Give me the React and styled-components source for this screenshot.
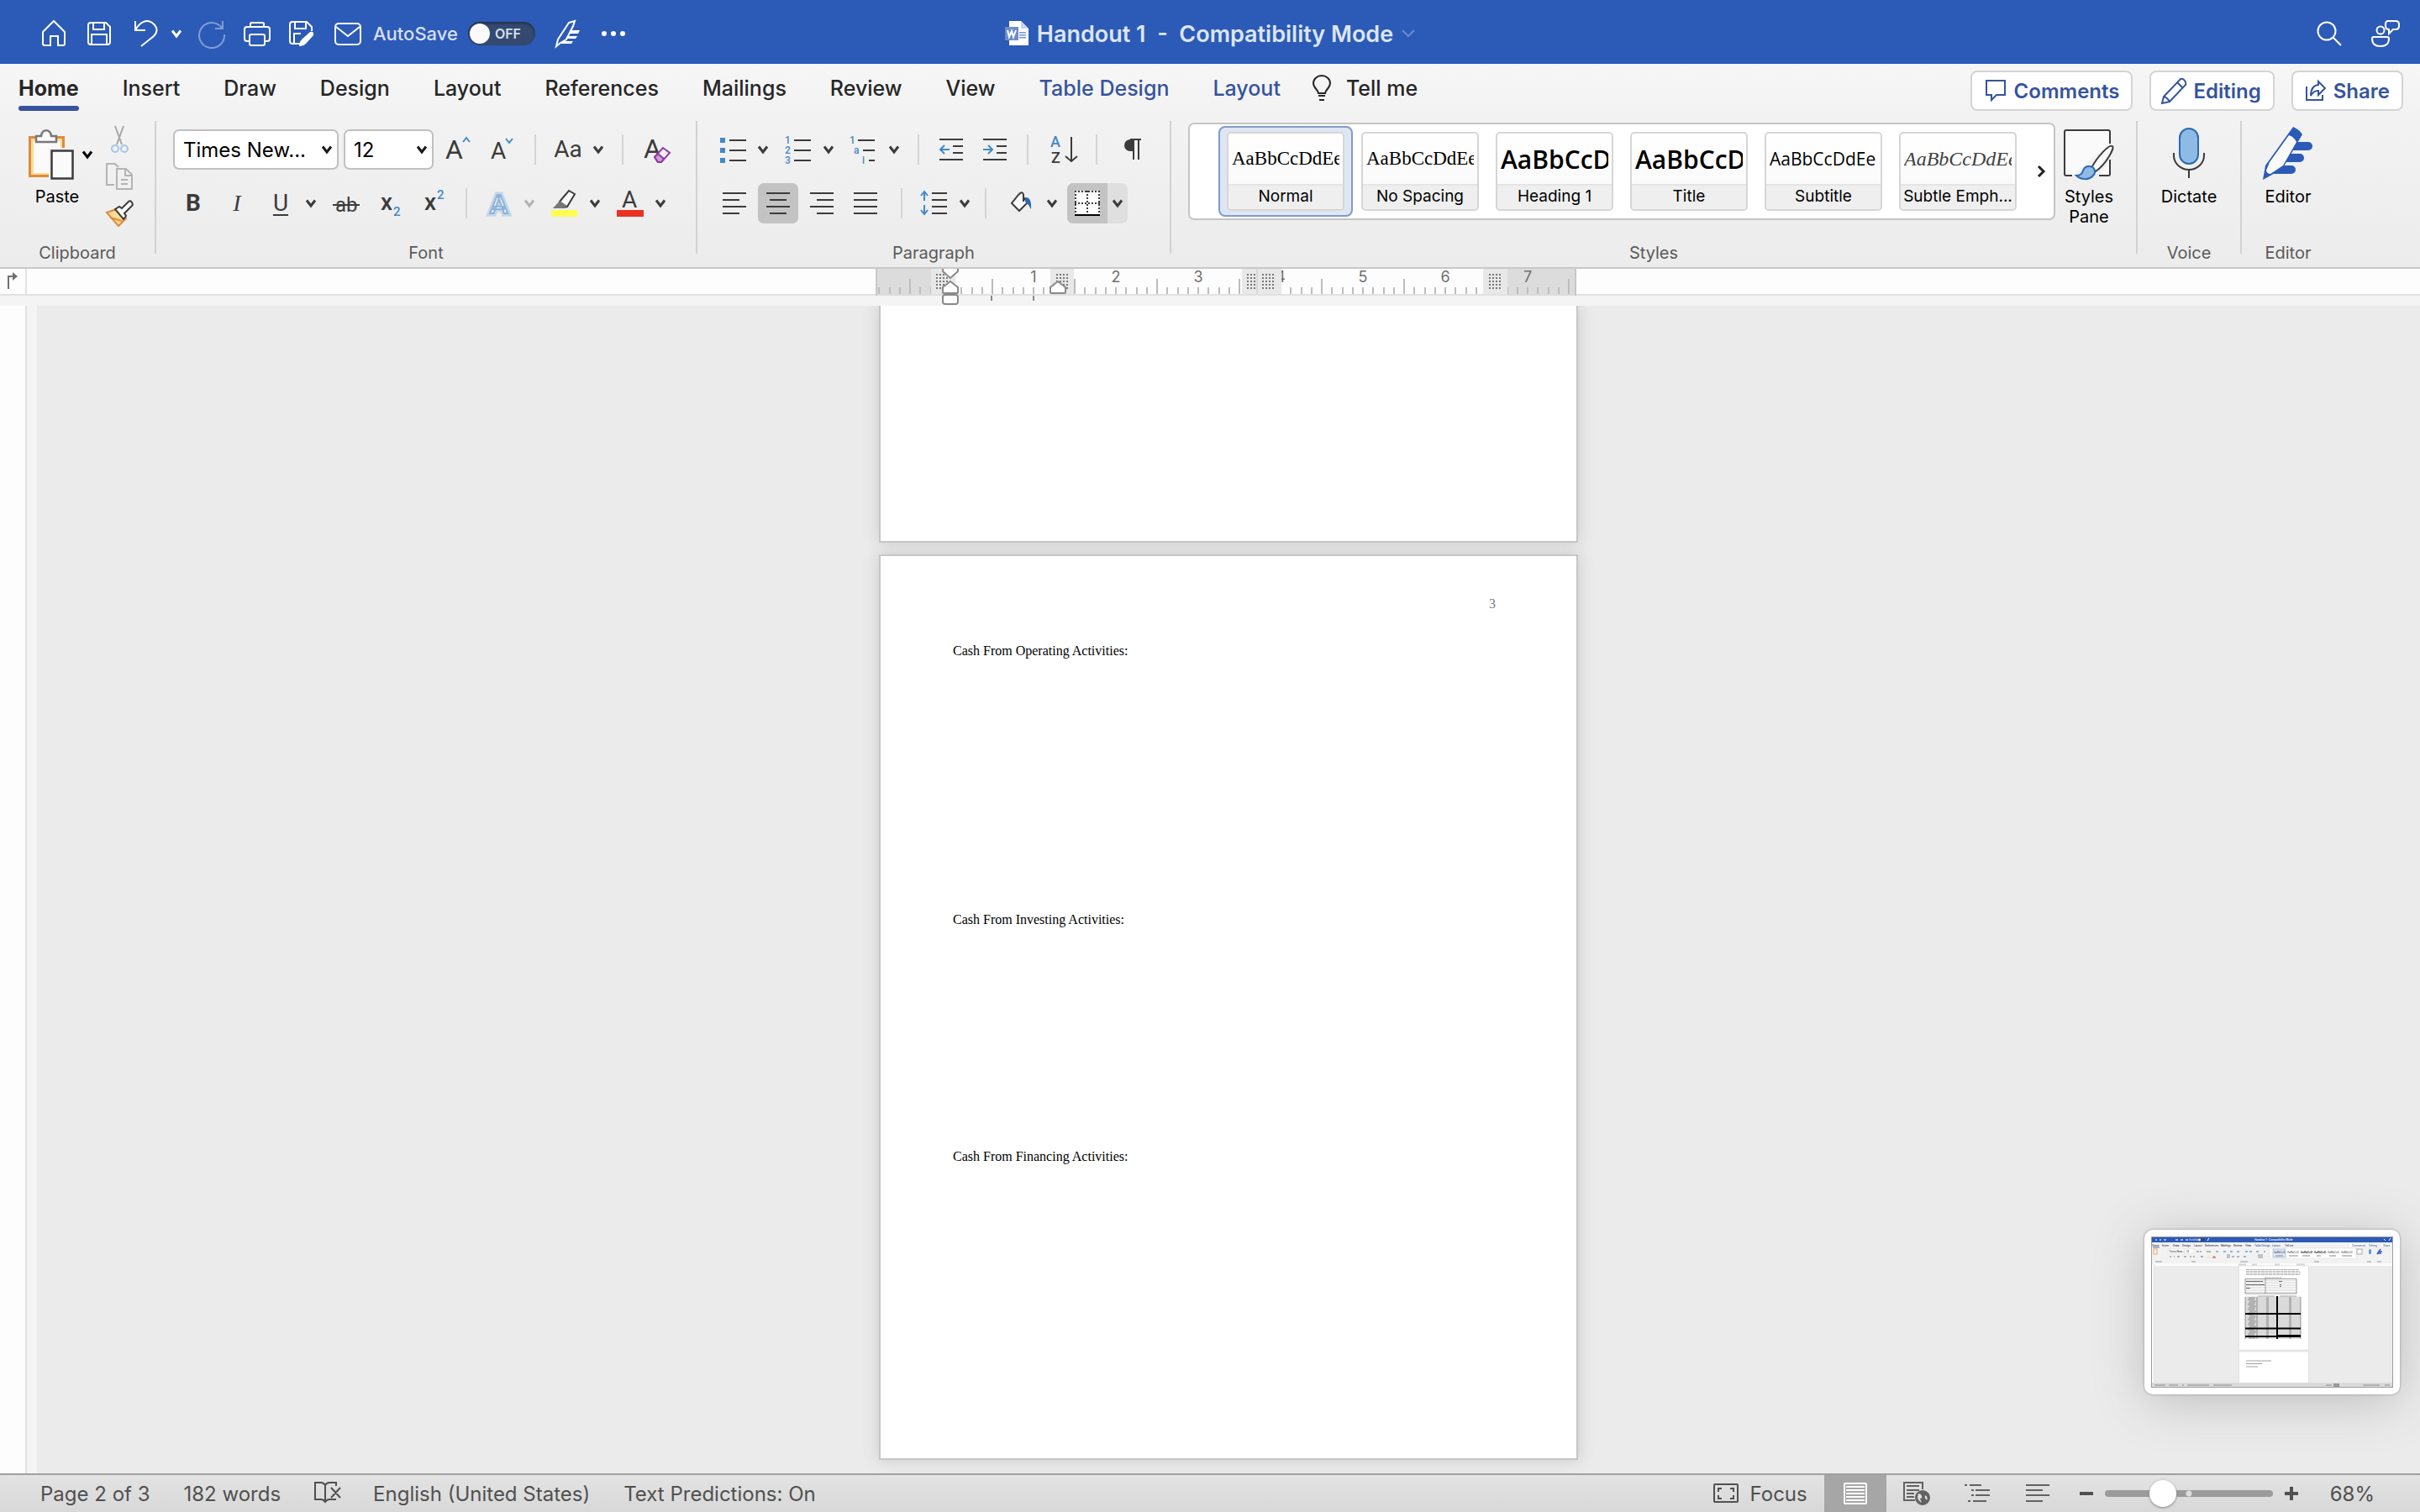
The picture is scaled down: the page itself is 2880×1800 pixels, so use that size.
import React from "react";
import styled, { createGlobalStyle } from "styled-components";

const Global = createGlobalStyle`
  * { box-sizing: border-box; }
  html, body { margin: 0; padding: 0; }
  body { font-family: Inter, "Liberation Sans", sans-serif; color: #262626; overflow: hidden; }
  button, input, select { font-family: inherit; color: inherit; margin: 0; }
  button { border: 0; background: none; padding: 0; }
  svg { display: block; flex: none; overflow: visible; }
  h1, h2, p { margin: 0; font-weight: inherit; }
`;

const ink = "#3b3b3b";
const sky = "#4189c7";
const navy = "#35549d";

const Svg = ({ w = 32, h = 32, sw = 2, children, ...rest }) => (
  <svg width={w} height={h} viewBox={`0 0 ${w} ${h}`} fill="none" stroke="currentColor" strokeWidth={sw} aria-hidden="true" {...rest}>
    {children}
  </svg>
);

const Chevron = () => (
  <Svg w={12} h={10} sw={3}><path d="M1 1.5 6 8 11 1.5" /></Svg>
);

/* ---------- shell ---------- */
const Shell = styled.div`
  display: flex;
  flex-direction: column;
  height: 100vh;
  background: #ebebeb;
`;

/* ---------- title bar ---------- */
const TitleBar = styled.header`
  display: grid;
  grid-template-columns: 1fr auto 1fr;
  align-items: center;
  height: 76px;
  padding: 4px 24px 0;
  background: #2c5ab7;
  color: #fff;
`;
const Quick = styled.div`
  display: flex;
  align-items: center;
  gap: 22px;
  padding-left: 24px;
  white-space: nowrap;
`;
const Pair = styled.div`
  display: flex;
  align-items: center;
  gap: ${(p) => p.$gap || 14}px;
`;
const BarButton = styled.button`
  display: flex;
  opacity: ${(p) => (p.$dim ? 0.4 : 1)};
`;
const AutoSave = styled.label`
  display: flex;
  align-items: center;
  gap: 12px;
  margin-left: -8px;
  font-size: 22px;
  font-weight: 500;
  color: #d6dff1;
`;
const Switch = styled.span`
  display: flex;
  align-items: center;
  gap: 6px;
  width: 80px;
  height: 28px;
  padding: 2px;
  border-radius: 14px;
  background: #34496f;
  box-shadow: inset 0 2px 3px #22314f;
  font-size: 16px;
  font-weight: 600;
`;
const Tick = styled.input`
  appearance: none;
  width: 24px;
  height: 24px;
  border-radius: 50%;
  background: #fafafa;
`;
const DocTitle = styled.div`
  display: flex;
  align-items: center;
  gap: 10px;
  font-size: 27px;
  font-weight: 600;
  color: #dde5f4;
  white-space: pre;
`;
const BarEnd = styled.div`
  display: flex;
  justify-content: flex-end;
  gap: 34px;
`;

/* ---------- tabs ---------- */
const Chrome = styled.div`
  background: linear-gradient(#f6f6f6, #f2f2f2 30%, #ececec);
  border-bottom: 2px solid #c8c8c8;
`;
const TabRow = styled.nav`
  display: flex;
  justify-content: space-between;
  height: 64px;
  padding: 8px 20px 0 22px;
`;
const Tabs = styled.div`
  display: flex;
  gap: 52px;
  align-items: flex-start;
`;
const Tab = styled.button`
  display: flex;
  flex-direction: column;
  height: 48px;
  padding-top: 5px;
  font-size: 25px;
  line-height: 32px;
  white-space: nowrap;
  font-weight: ${(p) => (p.$active ? 700 : 500)};
  color: ${(p) => (p.$context ? navy : "#262626")};
  &::after {
    content: "";
    width: 100%;
    height: 6px;
    margin-top: 5px;
    border-radius: 3px;
    background: ${(p) => (p.$active ? navy : "transparent")};
  }
`;
const TellMe = styled.button`
  display: flex;
  gap: 18px;
  margin-left: -14px;
  padding-top: 5px;
  font-size: 25px;
  line-height: 32px;
  font-weight: 500;
`;
const Actions = styled.div`
  display: flex;
  gap: 20px;
`;
const Action = styled.button`
  display: flex;
  align-items: center;
  gap: 8px;
  height: 48px;
  padding: 0 14px;
  border: 2px solid #d4d4d4;
  border-radius: 8px;
  background: #fff;
  color: ${navy};
  font-size: 24px;
  font-weight: 600;
`;

/* ---------- ribbon ---------- */
const Ribbon = styled.div`
  display: flex;
  height: 178px;
  padding-top: 4px;
`;
const Group = styled.section`
  display: flex;
  flex-direction: column;
  justify-content: space-between;
  width: ${(p) => (p.$w ? p.$w + "px" : "auto")};
  flex: ${(p) => (p.$w ? "none" : "1")};
  min-width: 0;
  padding-bottom: 5px;
  margin-right: ${(p) => (p.$last ? 102 : 0)}px;
`;
const GroupLabel = styled.h2`
  font-size: 20px;
  line-height: 24px;
  text-align: center;
  color: #5a5a5a;
`;
const GroupSep = styled.div`
  flex: none;
  width: 2px;
  height: 158px;
  background: #d2d2d2;
`;
const Rows = styled.div`
  display: flex;
  flex-direction: column;
  gap: 16px;
  padding: 10px 0 0 20px;
`;
const Row = styled.div`
  display: flex;
  align-items: center;
  height: 48px;
  gap: ${(p) => p.$gap || 20}px;
  padding-left: ${(p) => p.$pad || 0}px;
`;
const Sep = styled.div`
  flex: none;
  width: 2px;
  height: 36px;
  margin: 0 2px;
  background: #d4d4d4;
`;
const IconButton = styled.button`
  display: flex;
  justify-content: center;
  align-items: center;
  width: ${(p) => p.$w || 32}px;
  height: 32px;
  flex: none;
  color: ${(p) => (p.$dim ? "#b4b4b4" : ink)};
`;
const AlignButton = styled(IconButton)`
  width: 48px;
  height: 48px;
  border-radius: 7px;
  background: ${(p) => (p.$active ? "#c3c3c3" : "none")};
`;
const BorderSplit = styled.div`
  display: flex;
  height: 48px;
  border-radius: 7px;
  overflow: hidden;
  background: #dfdfdf;
`;
const BorderMain = styled(AlignButton)`
  border-radius: 0;
`;
const BorderDrop = styled(IconButton)`
  width: 24px;
  height: 48px;
`;
const Glyph = styled.span`
  font-size: 28px;
  line-height: 32px;
  font-family: ${(p) => (p.$serif ? '"Liberation Serif", serif' : 'Roboto, "Liberation Sans", sans-serif')};
  font-weight: ${(p) => p.$weight || 400};
  font-style: ${(p) => (p.$italic ? "italic" : "normal")};
  text-decoration: ${(p) => p.$line || "none"};
  text-decoration-thickness: 2px;
  text-underline-offset: 4px;
  color: ${ink};
`;
const Selects = styled.div`
  display: flex;
  gap: 6px;
  margin-right: -6px;
`;
const SelectBox = styled.label`
  display: grid;
  align-items: center;
  width: ${(p) => p.$w}px;
  height: 48px;
  color: #1a1a1a;
  & > * { grid-area: 1 / 1; }
  & > svg { justify-self: end; margin-right: 8px; pointer-events: none; }
`;
const Select = styled.select`
  appearance: none;
  width: 100%;
  height: 48px;
  padding: 0 10px;
  border: 2px solid #c0c0c0;
  border-radius: 7px;
  background: #fff;
  font-size: 24px;
  color: #000;
`;
const Clip = styled.div`
  display: flex;
  gap: 16px;
  padding: 6px 0 0 34px;
`;
const SmallColumn = styled.div`
  display: flex;
  flex-direction: column;
  gap: 12px;
`;
const BigButton = styled.button`
  display: flex;
  flex-direction: column;
  align-items: center;
  gap: 8px;
  flex: none;
  width: ${(p) => p.$w}px;
  padding-top: ${(p) => p.$top || 10}px;
  font-size: 20px;
  line-height: 24px;
  color: #000;
`;
const PasteLabel = styled.span`
  padding-right: 8px;
`;
const Centered = styled.div`
  display: flex;
  justify-content: center;
`;
const StylesRow = styled.div`
  display: flex;
  gap: 8px;
  padding: 0 24px 0 20px;
`;
const Gallery = styled.div`
  display: flex;
  align-items: center;
  flex: 1;
  min-width: 0;
  height: 116px;
  margin-top: 2px;
  padding: 0 10px 0 34px;
  border: 2px solid #c4c4c4;
  border-radius: 7px;
  background: #fff;
`;
const StyleSlot = styled.button`
  flex: none;
  width: 160px;
  height: 108px;
  padding: 5px 8px;
  border: 2px solid ${(p) => (p.$active ? "#7f9ccb" : "transparent")};
  border-radius: 8px;
  background: ${(p) => (p.$active ? "#dfe6f3" : "none")};
`;
const StyleCard = styled.span`
  display: flex;
  flex-direction: column;
  height: 94px;
  border: 2px solid #d6d6d6;
  border-radius: 5px;
  overflow: hidden;
  background: linear-gradient(#fff, #f8f8f8);
`;
const Sample = styled.span`
  display: flex;
  align-items: center;
  height: 60px;
  margin: 0 4px;
  overflow: hidden;
  white-space: nowrap;
  font-family: ${(p) => (p.$serif ? '"Liberation Serif", serif' : '"Open Sans", sans-serif')};
  font-size: ${(p) => p.$size}px;
  font-weight: ${(p) => p.$weight || 400};
  font-style: ${(p) => (p.$italic ? "italic" : "normal")};
  color: ${(p) => (p.$italic ? "#404040" : "#000")};
`;
const StyleName = styled.span`
  height: 30px;
  border-top: 2px solid #e4e4e4;
  background: #efefef;
  font-size: 19px;
  line-height: 26px;
  text-align: center;
  color: #000;
`;
const More = styled.button`
  display: flex;
  margin-left: auto;
  color: #222;
`;

/* ---------- rulers and canvas ---------- */
const RulerBar = styled.div`
  display: flex;
  flex: none;
  height: 44px;
  background: linear-gradient(#fdfdfd 30px, #e1e1e1 30px, #e1e1e1 32px, #f4f4f4 32px);
`;
const RulerCorner = styled.div`
  width: 32px;
  height: 32px;
  padding: 4px 0 0 8px;
  border-right: 2px solid #e1e1e1;
  color: #707070;
`;
const RulerTrack = styled.div`
  display: flex;
  justify-content: center;
  flex: 1;
  padding-left: 6px;
`;
const Workspace = styled.main`
  display: flex;
  flex: 1;
  min-height: 0;
`;
const SideRuler = styled.div`
  width: 32px;
  background: #fdfdfd;
  border-right: 2px solid #e1e1e1;
`;
const SideGutter = styled.div`
  width: 12px;
  background: #f4f4f4;
`;
const Canvas = styled.div`
  display: flex;
  flex-direction: column;
  align-items: center;
  gap: 14px;
  flex: 1;
  overflow: hidden;
`;
const Page = styled.article`
  flex: none;
  width: 832px;
  height: ${(p) => p.$h}px;
  padding: 47px 96px 0 86px;
  border: 2px solid #c6c6c6;
  border-top-width: ${(p) => (p.$cut ? 0 : 2)}px;
  background: #fff;
  box-shadow: 0 0 18px #c8c8c8;
  font-family: "Liberation Serif", serif;
  font-size: 16px;
  line-height: 20px;
  color: #000;
`;
const PageNumber = styled.p`
  height: 56px;
  text-align: right;
  color: #808080;
`;
const Section = styled.p`
  min-height: ${(p) => p.$h}px;
`;

/* ---------- floating capture preview ---------- */
const Preview = styled.aside`
  position: fixed;
  right: 24px;
  bottom: 140px;
  padding: 8px;
  border-radius: 10px;
  background: #fff;
  box-shadow: 0 0 3px #8c8c8c, 0 8px 60px #bdbdbd;
`;

/* ---------- status bar ---------- */
const StatusBar = styled.footer`
  display: flex;
  justify-content: space-between;
  flex: none;
  height: 46px;
  padding: 0 54px 0 48px;
  border-top: 2px solid #a0a0a0;
  background: linear-gradient(#e3e3e3, #d8d8d8);
  color: #505050;
  position: relative;
`;
const StatusSide = styled.div`
  display: flex;
  align-items: center;
  gap: ${(p) => p.$gap}px;
  white-space: nowrap;
`;
const StatusButton = styled.button`
  display: flex;
  align-items: center;
  gap: 14px;
  font-size: 24px;
`;
const ViewButton = styled.button`
  display: flex;
  align-items: center;
  justify-content: center;
  width: ${(p) => (p.$w || 72)}px;
  height: 44px;
  background: ${(p) => (p.$active ? "#a6a6a6" : "none")};
  color: ${(p) => (p.$active ? "#fff" : "#626262")};
`;
const Views = styled.div`
  display: flex;
  margin: 0 14px 0 20px;
`;
const Zoom = styled.div`
  display: flex;
  align-items: center;
  gap: 14px;
  margin-right: 38px;
`;
const Range = styled.input`
  appearance: none;
  width: 200px;
  height: 32px;
  background: transparent;
  &::-webkit-slider-runnable-track {
    height: 8px;
    border-radius: 4px;
    background: radial-gradient(circle at 50% 50%, #dedede 3px, transparent 4px), #9b9b9b;
  }
  &::-webkit-slider-thumb {
    appearance: none;
    width: 32px;
    height: 32px;
    margin-top: -12px;
    border-radius: 50%;
    background: #fff;
    box-shadow: 0 1px 3px #808080;
  }
`;

/* ---------- drawings ---------- */
const lines = (rows, color = ink) => rows.map(([x, y, w], i) => <rect key={i} x={x} y={y} width={w} height="2" fill={color} stroke="none" />);

const PasteIcon = () => (
  <Svg w={54} h={60}>
    <path d="M1.5 9.5h40v46h-40z" fill="#f8dd96" stroke="#e08a3c" strokeWidth="3" />
    <path d="M6 14h32v38H6z" fill="#fafafa" stroke="none" />
    <path d="M9 8h6c1-9 11-9 12 0h6v7H9z" fill="#fafafa" stroke="#777" strokeWidth="2.5" />
    <path d="M24 22h30v38H24z" fill="#f2f2f2" stroke="none" />
    <path d="M27.5 25.5h25v33h-25z" fill="#fafafa" stroke={ink} strokeWidth="2.5" />
  </Svg>
);
const StylesPaneIcon = () => (
  <Svg w={60} h={60}>
    <path d="M10 55H3a2 2 0 0 1-2-2V3a2 2 0 0 1 2-2h50a2 2 0 0 1 2 2v14M42 55h11a2 2 0 0 0 2-2V36" fill="#fafafa" stroke={ink} />
    <path d="M58 20c3 2-8 22-20 30l-5-4c6-12 21-29 25-26z" fill="#fafafa" stroke={ink} />
    <path d="M30 44c7 0 9 7 5 11-5 6-15 5-20 0 5 0 7-2 8-6 1-3 3-5 7-5z" fill="#8ebae6" stroke="#2c69b0" />
  </Svg>
);
const MicIcon = () => (
  <Svg w={38} h={60}>
    <rect x="8" y="-1" width="22" height="42" rx="11" fill="#8ebae6" stroke="#2c69b0" />
    <path d="M1 28v3a18 17 0 0 0 36 0v-3M19 48v10" stroke={ink} />
  </Svg>
);
const EditorIcon = () => (
  <Svg w={62} h={60} stroke="none">
    <path d="M36 15h19a5 5 0 0 1 0 10H30zM28 29h17a5 5 0 0 1 0 10H22zM20 43h15a5 5 0 0 1 0 10H11z" fill="#2c5ab7" />
    <path d="M37-3q7 3 11 9L26 44 12 54 1 60l3-17z" fill="#2c5ab7" />
    <path d="M32 7q6 2 9 8L25 43 10 53q-4 0-5-4l4-10z" fill="#fafafa" />
  </Svg>
);
const AlignIcon = ({ kind }) => {
  const x = { left: 0, center: 4, right: 8, full: 0 }[kind];
  const w = kind === "full" ? 28 : 20;
  return <Svg w={28} h={28}>{lines([[0, 1, 28], [x, 9, w], [0, 17, 28], [x, 25, w]])}</Svg>;
};
const IndentIcon = ({ flip }) => (
  <Svg>
    {lines([[2, 3, 28], [18, 11, 12], [18, 19, 12], [2, 27, 28]])}
    <path d={flip ? "M2 16h11M8 11l5 5-5 5" : "M14 16H3M8 11l-5 5 5 5"} stroke={sky} />
  </Svg>
);
const ListText = styled.text`
  font-family: Roboto, sans-serif;
  font-size: 12px;
  font-weight: 500;
  fill: ${sky};
  stroke: none;
`;
const LetterText = styled.text`
  font-family: Roboto, sans-serif;
  font-size: ${(p) => p.$size}px;
  font-weight: ${(p) => p.$weight || 400};
  fill: ${(p) => p.$fill || ink};
  stroke: ${(p) => p.$stroke || "none"};
`;
const RulerText = styled.text`
  font-family: Inter, sans-serif;
  font-size: 18px;
  fill: #707070;
  stroke: none;
  text-anchor: middle;
`;

const SaveShape = ({ cut }) => (
  <>
    <path d={cut ? "M14 27H4a3 3 0 0 1-3-3V4a3 3 0 0 1 3-3h17l6 6v5" : "M4 1h18l5 5v18a3 3 0 0 1-3 3H4a3 3 0 0 1-3-3V4a3 3 0 0 1 3-3z"} />
    <path d={cut ? "M7 1v8h13V1M14 15H6v12" : "M7 1v8h13V1M5 27V15h18v12"} />
  </>
);

function Ruler() {
  const zero = 90;
  const inch = 98;
  const ticks = [];
  for (let i = -7; i <= 60; i++) {
    const x = Math.round(zero + (i * inch) / 8);
    const half = ((i % 8) + 8) % 8 === 4;
    const hidden = (x > 66 && x < 96) || (x > 207 && x < 236) || (x > 435 && x < 483) || (x > 722 && x < 752);
    if (!hidden && x < 832) ticks.push(<rect key={i} x={x - 1} y={half ? 12 : 22} width="2" height={half ? 18 : 8} fill="#bdbdbd" />);
  }
  const dots = (x, n) => {
    const out = [];
    for (let c = 0; c < n; c++) for (let r = 0; r < 5; r++) out.push(<rect key={c + "-" + r} x={x + c * 4} y={6 + r * 4} width="2" height="2" fill="#777" />);
    return out;
  };
  return (
    <svg width="834" height="44" viewBox="0 0 834 44" role="img" aria-label="Horizontal ruler">
      <rect x="0" y="0" width="66" height="32" fill="#dcdcdc" />
      <rect x="752" y="0" width="82" height="32" fill="#dcdcdc" />
      <rect x="0" y="0" width="2" height="32" fill="#c8c8c8" />
      <rect x="832" y="0" width="2" height="32" fill="#c8c8c8" />
      {ticks}
      {[1, 2, 3, 4, 5, 6, 7].map((n) => <RulerText key={n} x={zero + n * inch} y="16">{n}</RulerText>)}
      <rect x="66" y="0" width="29" height="30" fill="#e8e8e8" />
      <rect x="208" y="0" width="28" height="30" fill="#e8e8e8" />
      <rect x="436" y="0" width="47" height="30" fill="#e8e8e8" />
      <rect x="453" y="0" width="2" height="30" fill="#d8d8d8" />
      <rect x="723" y="0" width="29" height="30" fill="#e8e8e8" />
      {dots(72, 4)}{dots(215, 4)}{dots(442, 3)}{dots(460, 4)}{dots(730, 4)}
      <g fill="#fff" stroke="#8a8a8a" strokeWidth="2">
        <path d="M80 0v3l9 8 9-8V0" />
        <path d="M80 28v-6l9-7 9 7v6q0 1-1 1H81q-1 0-1-1z" />
        <rect x="80" y="31" width="18" height="11" rx="3" />
        <path d="M208 28v-6l9-7 9 7v6q0 1-1 1h-16q-1 0-1-1z" />
      </g>
      <path d="M138 32v6M188 32v6" stroke="#8a8a8a" strokeWidth="2" />
    </svg>
  );
}

const MiniText = styled.text`
  font-family: Inter, sans-serif;
  font-size: 3px;
  font-weight: ${(p) => p.$weight || 500};
  fill: ${(p) => p.$fill || "#333"};
`;

function PreviewPicture() {
  const tabs = [["Home", 1], ["Insert", 13], ["Draw", 26], ["Design", 37], ["Layout", 51], ["References", 64], ["Mailings", 83], ["Review", 98], ["View", 112], ["Table Design", 123], ["Layout", 144], ["Tell me", 159]];
  const rows = [];
  for (let y = 73; y < 122; y += 2) rows.push(y);
  return (
    <svg width="288" height="180" viewBox="0 0 288 180" role="img" aria-label="Preview of the captured window">
      <rect width="288" height="180" fill="#ebebeb" />
      <rect y="0" width="288" height="7" fill="#2c5ab7" />
      <rect y="7" width="288" height="25" fill="#f2f2f2" />
      <rect y="32" width="288" height="3" fill="#fbfbfb" />
      <path d="M5 4h2M10 4h2M15 4h3M29 4h3M35 4h3M41 4h3" stroke="#9db3e0" strokeWidth="2" />
      <MiniText x="45" y="5" $fill="#dde5f4">AutoSave</MiniText>
      <rect x="56" y="2.500" width="8" height="3" rx="1.500" fill="#34496f" />
      <circle cx="57.500" cy="4" r="1.400" fill="#fff" />
      <MiniText x="123" y="5" $weight="600" $fill="#fff">Handout 1 - Compatibility Mode</MiniText>
      <path d="M67 5l2-3M277 3l2 2M283 5l2-3" stroke="#fff" />
      {tabs.map(([t, x]) => <MiniText key={x} x={x} y="11.500" $fill={x === 123 || x === 144 ? navy : "#333"}>{t}</MiniText>)}
      <path d="M2 13h8" stroke={navy} strokeWidth=".8" />
      <g fill="#fff" stroke="#d4d4d4" strokeWidth=".4">
        <rect x="235" y="8" width="19" height="5" rx="1" /><rect x="256" y="8" width="14" height="5" rx="1" /><rect x="273" y="8" width="13" height="5" rx="1" />
        <rect x="20" y="15" width="19" height="5" /><rect x="40" y="15" width="11" height="5" /><rect x="141" y="14" width="103" height="12" />
      </g>
      <MiniText x="239" y="11.500" $fill={navy}>Comments</MiniText>
      <MiniText x="259" y="11.500" $fill={navy}>Editing</MiniText>
      <MiniText x="276" y="11.500" $fill={navy}>Share</MiniText>
      <MiniText x="21" y="18.500">Times New...</MiniText>
      <MiniText x="42" y="18.500">12</MiniText>
      <rect x="145" y="15" width="15" height="10" fill="#dfe6f3" stroke="#7f9ccb" strokeWidth=".5" />
      {[146, 162, 178, 194, 210, 226].map((x, i) => <MiniText key={x} x={x} y="19.500" $weight={i === 2 || i === 3 ? 700 : 400}>AaBbCcD</MiniText>)}
      <path d="M148 23h9M164 23h11M180 23h9M197 23h5M212 23h8M227 23h12" stroke="#888" strokeWidth="1" />
      <path d="M3 15h4v6H3z" fill="#fafafa" stroke="#e08a3c" strokeWidth=".8" />
      <path d="M54 18h3M58 18h2M66 18h5M77 18h3M22 24h2M27 24h1M31 24h3M39 24h3M46 24h2M50 24h2M74 24h2M96 24h3M102 24h3M134 18h2" stroke="#777" />
      <path d="M86 18h3M94 18h3M102 18h3M112 18h3M117 18h3M125 18h3M59 24h3M110 24h3" stroke="#8cb5dc" strokeWidth="2" />
      <path d="M66 25h4" stroke="#f5e850" /><path d="M73 25h4" stroke="#e6392b" />
      <rect x="90" y="21" width="4" height="5" fill="#c3c3c3" /><rect x="127" y="21" width="6" height="5" fill="#c3c3c3" />
      <rect x="245" y="15" width="6" height="6" fill="#fafafa" stroke="#666" strokeWidth=".5" />
      <rect x="259" y="15" width="3" height="6" rx="1.500" fill="#5c98d5" />
      <path d="M269 21l4-6M271 18h4M270 20h4" stroke="#2c5ab7" strokeWidth="1.500" />
      <path d="M5 30h8M48 30h5M106 30h9M194 30h6M257 30h5M269 30h5" stroke="#999" strokeWidth="1" />
      <path d="M104 33.500h9M120 33.500h6M147 33.500h6M173 33.500h10" stroke="#d4d4d4" strokeWidth="2" />
      <path d="M3.500 33v142" stroke="#e1e1e1" />
      <path d="M0 35h3v139H0z" fill="#fafafa" />
      <rect x="104.500" y="35" width="83" height="100" fill="#fff" stroke="#d0d0d0" strokeWidth=".5" />
      <rect x="104.500" y="137" width="83" height="38" fill="#fff" stroke="#d0d0d0" strokeWidth=".5" />
      <path d="M113 39.500h63M113 41.500h64M113 43.500h65M113 45.500h64M135 49h20" stroke="#999" strokeDasharray="4 .5" strokeWidth=".8" />
      <path d="M112 50.500h61v17.500h-61zM136 50.500v17.500" stroke="#555" strokeWidth=".6" fill="none" />
      <path d="M112 52.500h61M112 54.500h61M112 56.500h61M112 58.500h61M112 60.500h61M112 62.500h61M112 64.500h61M112 66.500h61" stroke="#aaa" strokeWidth=".4" fill="none" />
      <path d="M113 53.500h20M113 57.500h22M113 61.500h5M152 53.500h4M153 57.500h2M153 59.500h2" stroke="#555" strokeWidth=".8" />
      <path d="M127 71h20M153 71h20" stroke="#888" strokeWidth=".8" />
      <rect x="112" y="72" width="66" height="50" fill="#e6e6e6" />
      {rows.map((y) => <path key={y} d={`M112 ${y - 1}h66`} stroke="#aaa" strokeWidth=".4" />)}
      {rows.map((y) => <path key={y} d={`M${115 + (y % 3)} ${y}h8M137 ${y}h3M164 ${y}h3`} stroke="#777" strokeWidth=".8" />)}
      <path d="M112 72v50M126 72v50M178 72v50" stroke="#555" strokeWidth=".6" />
      <path d="M150 71v51M112 92h66M112 109.500h66M112 119h66M151 118h27" stroke="#000" strokeWidth="2" />
      <path d="M113 148h30M113 151.500h19M113 155h14" stroke="#888" strokeWidth=".8" />
      <rect y="174" width="288" height="6" fill="#dadada" />
      <path d="M4 177h13M21 177h11M37 177h2M43 177h26M74 177h22M208 177h7M252 177h20M278 177h6" stroke="#888" strokeWidth="1" />
      <rect x="217" y="175" width="7" height="4" fill="#999" />
      <rect x=".5" y=".5" width="287" height="179" fill="none" stroke="#9c9c9c" />
    </svg>
  );
}

const STYLES = [
  { name: "Normal", sample: "AaBbCcDdEe", serif: true, size: 23, active: true },
  { name: "No Spacing", sample: "AaBbCcDdEe", serif: true, size: 23 },
  { name: "Heading 1", sample: "AaBbCcD", size: 30, weight: 600 },
  { name: "Title", sample: "AaBbCcD", size: 30, weight: 600 },
  { name: "Subtitle", sample: "AaBbCcDdEe", size: 21 },
  { name: "Subtle Emph...", sample: "AaBbCcDdEe", serif: true, size: 24, italic: true },
];

const Split = ({ label, w, dim, children }) => (
  <Pair>
    <IconButton aria-label={label} $w={w} $dim={dim}>{children}</IconButton>
    <IconButton aria-label={label + " options"} $w={12} $dim={dim}><Chevron /></IconButton>
  </Pair>
);

export default function App() {
  return (
    <Shell>
      <Global />
      <TitleBar>
        <Quick>
          <BarButton aria-label="Home"><Svg w={34}><path d="M3 14 16 1l13 13v14a2 2 0 0 1-2 2h-6V19h-9v11H5a2 2 0 0 1-2-2z" /></Svg></BarButton>
          <BarButton aria-label="Save"><Svg w={28} h={28}><SaveShape /></Svg></BarButton>
          <Pair $gap={16}>
            <BarButton aria-label="Undo"><Svg w={34}><path d="M7 1v11h12M7 12C13 1 21-1 27 3c8 6 6 12 2 16L14 31" /></Svg></BarButton>
            <BarButton aria-label="Undo list"><Chevron /></BarButton>
          </Pair>
          <BarButton aria-label="Redo" $dim><Svg w={30}><path d="M27 1v9h-9M26 9A15 15 0 1 0 29 17" /></Svg></BarButton>
          <BarButton aria-label="Print"><Svg><path d="M8 8V4q0-1 2-1h12q2 0 2 1v4M7 25H4a3 3 0 0 1-3-3V11a3 3 0 0 1 3-3h24a3 3 0 0 1 3 3v11a3 3 0 0 1-3 3h-3" /><rect x="7" y="17" width="18" height="13" rx="2" /></Svg></BarButton>
          <BarButton aria-label="Save as"><Svg w={32} h={30}><SaveShape cut /><path d="M12 30q0-5 3-8l10-9q5-1 4 4l-9 10q-3 3-8 3z" fill="#fff" stroke="none" /></Svg></BarButton>
          <BarButton aria-label="Mail"><Svg><rect x="1" y="4" width="30" height="25" rx="4" /><path d="M2 8l14 11L30 8" /></Svg></BarButton>
          <AutoSave>AutoSave
            <Switch><Tick type="checkbox" role="switch" />OFF</Switch>
          </AutoSave>
          <BarButton aria-label="Editor"><Svg><path d="M18 3l7-2-2 6-8 16-7 4-5 4 2-8z" /><path d="M20 12h11l-2 4H18zM16 19h12l-2 3H14zM12 25h11l-2 3H8z" fill="#fff" stroke="none" /></Svg></BarButton>
          <BarButton aria-label="More"><Svg stroke="none"><path d="M6 13a3 3 0 1 1 0 6 3 3 0 0 1 0-6zm11 0a3 3 0 1 1 0 6 3 3 0 0 1 0-6zm11 0a3 3 0 1 1 0 6 3 3 0 0 1 0-6z" fill="#fff" /></Svg></BarButton>
        </Quick>
        <DocTitle>
          <Svg w={28} h={30} stroke="none">
            <path d="M5 0h14l9 9v20H5z" fill="#fff" />
            <path d="M19 0l9 9h-9z" fill="#c5d3ec" />
            <path d="M17 13h8v1.500h-8zm0 3h8v1.500h-8zm0 3h8v1.500h-8z" fill="#6b93d6" />
            <rect x="0" y="7" width="16" height="16" fill="#6d8dc8" />
            <path d="M3 11l2 8 3-7 2 7 3-8" stroke="#fff" strokeWidth="2" />
          </Svg>
          <span>Handout 1  -  Compatibility Mode</span>
          <Svg w={16} h={10} opacity=".35"><path d="M1 1l7 7 7-7" /></Svg>
        </DocTitle>
        <BarEnd>
          <BarButton aria-label="Search"><Svg><circle cx="13" cy="13" r="10.500" /><path d="M20 20l10 10" /></Svg></BarButton>
          <BarButton aria-label="Presence"><Svg w={34}><circle cx="11" cy="12" r="4.500" /><path d="M3 20h16q2 0 2 2 0 9-10 9T1 22q0-2 2-2zM20 1h9q4 0 4 4v2q0 4-4 4h-3l-5 5v-5q-4 0-4-4V5q0-4 3-4z" /></Svg></BarButton>
        </BarEnd>
      </TitleBar>

      <Chrome>
        <TabRow aria-label="Ribbon tabs">
          <Tabs>
            {["Home", "Insert", "Draw", "Design", "Layout", "References", "Mailings", "Review", "View"].map((t) => (
              <Tab key={t} $active={t === "Home"}>{t}</Tab>
            ))}
            <Tab $context>Table Design</Tab>
            <Tab $context>Layout</Tab>
            <TellMe>
              <Svg w={22} h={32}><path d="M7 22c0-4-6-6-6-12a10 9 0 0 1 20 0c0 6-6 8-6 12zM7 25h8M8 30h6" /></Svg>
              Tell me
            </TellMe>
          </Tabs>
          <Actions>
            <Action><Svg w={28} h={28}><path d="M3 2h22v17H15l-6 6v-6H3z" /></Svg>Comments</Action>
            <Action><Svg w={28}><path d="M1 23 21 2q3-1 5 2t1 5L8 29l-9 2zM17 6l7 7M1 23q4 1 7 6" /></Svg>Editing</Action>
            <Action><Svg w={26} h={28}><path d="M2 9v16h19v-6" /><path d="M16 3l8 8-8 8v-5q-6 0-9 6 0-12 9-13z" /></Svg>Share</Action>
          </Actions>
        </TabRow>

        <Ribbon>
          <Group $w={184}>
            <Clip>
              <BigButton $w={76} $top={4}>
                <Pair $gap={10}><PasteIcon /><Chevron /></Pair>
                <PasteLabel>Paste</PasteLabel>
              </BigButton>
              <SmallColumn>
                <IconButton aria-label="Cut"><Svg><path d="M11 0l8 22M21 0l-8 22" stroke="#a6a6a6" /><circle cx="11" cy="27" r="4" stroke="#a4c6e6" /><circle cx="22" cy="27" r="4" stroke="#a4c6e6" /></Svg></IconButton>
                <IconButton aria-label="Copy" $dim><Svg><path d="M10 26H1V1h10l4 4M13 7h11l7 7v17H13zM23 7v8h8M18 20h8M18 25h8" /></Svg></IconButton>
                <IconButton aria-label="Format painter"><Svg><path d="M1 15l12-4 11 11-9 9z" fill="#f8dd96" stroke="#e08a3c" /><path d="M5 21l14 4" stroke="#e08a3c" /><path d="M11 11l5-3 3 2 8-8q2-2 4 1t-1 5l-8 8 2 3-3 4z" fill="#fafafa" /></Svg></IconButton>
              </SmallColumn>
            </Clip>
            <GroupLabel>Clipboard</GroupLabel>
          </Group>
          <GroupSep />

          <Group $w={642}>
            <Rows>
              <Row>
                <Selects>
                  <SelectBox $w={197}><Select aria-label="Font name"><option>Times New...</option></Select><Chevron /></SelectBox>
                  <SelectBox $w={107}><Select aria-label="Font size"><option>12</option></Select><Chevron /></SelectBox>
                </Selects>
                <IconButton aria-label="Increase font size"><Svg><LetterText x="0" y="27" $size={32}>A</LetterText><path d="M21 7l4-5 4 5" stroke={sky} /></Svg></IconButton>
                <IconButton aria-label="Decrease font size"><Svg><LetterText x="2" y="27" $size={28}>A</LetterText><path d="M20 3l4 5 4-5" stroke={sky} /></Svg></IconButton>
                <Sep />
                <Split label="Change case"><Glyph>Aa</Glyph></Split>
                <Sep />
                <IconButton aria-label="Clear formatting"><Svg><LetterText x="2" y="26" $size={32}>A</LetterText><path d="M15 25l10-11 8 6-10 11h-4z" fill="#f3eef6" stroke="#8e3ba0" /><path d="M15 25l4-4 7 6-3 4h-4z" fill="#cf9bdb" stroke="#8e3ba0" /></Svg></IconButton>
              </Row>
              <Row $pad={8}>
                <IconButton aria-label="Bold"><Glyph $weight={700}>B</Glyph></IconButton>
                <IconButton aria-label="Italic"><Glyph $serif $italic>I</Glyph></IconButton>
                <Split label="Underline"><Glyph $line="underline">U</Glyph></Split>
                <IconButton aria-label="Strikethrough"><Svg><LetterText x="3" y="26" $size={24}>ab</LetterText><path d="M0 18h32" stroke={ink} /></Svg></IconButton>
                <IconButton aria-label="Subscript"><Svg><LetterText x="5" y="24" $size={28} $weight={500}>x</LetterText><LetterText x="20" y="31" $size={15} $weight={500} $fill={sky}>2</LetterText></Svg></IconButton>
                <IconButton aria-label="Superscript"><Svg><LetterText x="5" y="24" $size={28} $weight={500}>x</LetterText><LetterText x="20" y="11" $size={15} $weight={500} $fill={sky}>2</LetterText></Svg></IconButton>
                <Sep />
                <Split label="Text effects" dim><Svg><LetterText x="5" y="28" $size={32} $weight={500} $fill="none" $stroke="#c3d6ec" strokeWidth="7">A</LetterText><LetterText x="5" y="28" $size={32} $weight={500} $fill="#f8fafd" $stroke="#8fb1d8" strokeWidth="2">A</LetterText></Svg></Split>
                <Split label="Highlight color"><Svg><path d="M10 14 21 1l7 4-9 15-5 1-4-3z" fill="#fafafa" /><path d="M10 13l9 6-3 2-4 1H2z" fill="#777" stroke="none" /><path d="M0 24h31v8H0z" fill="#fdfd54" stroke="none" /></Svg></Split>
                <Split label="Font color"><Svg><LetterText x="6" y="21" $size={28}>A</LetterText><path d="M0 24h32v8H0z" fill="#e93223" stroke="none" /></Svg></Split>
              </Row>
            </Rows>
            <GroupLabel>Font</GroupLabel>
          </Group>
          <GroupSep />

          <Group $w={562}>
            <Rows>
              <Row $pad={6}>
                <Split label="Bullets"><Svg>{lines([[12, 4, 20], [12, 16, 20], [12, 28, 20]])}<path d="M1 2h6v6H1zM1 14h6v6H1zM1 26h6v6H1z" fill={sky} stroke="none" /></Svg></Split>
                <Split label="Numbering"><Svg>{lines([[11, 4, 20], [11, 16, 20], [11, 28, 20]])}<ListText x="0" y="9">1</ListText><ListText x="0" y="21">2</ListText><ListText x="0" y="33">3</ListText></Svg></Split>
                <Split label="Multilevel list"><Svg>{lines([[9, 4, 20], [15, 16, 14], [22, 28, 7]])}<ListText x="-1" y="9">1</ListText><ListText x="4" y="21">a</ListText><ListText x="14" y="33">i</ListText></Svg></Split>
                <Sep />
                <IconButton aria-label="Decrease indent"><IndentIcon /></IconButton>
                <IconButton aria-label="Increase indent"><IndentIcon flip /></IconButton>
                <Sep />
                <IconButton $w={36} aria-label="Sort"><Svg w={34}><LetterText x="3" y="13" $size={18} $weight={500} $fill={sky}>A</LetterText><LetterText x="4" y="32" $size={18} $weight={500}>Z</LetterText><path d="M28 1v29M21 24l7 6 7-6" /></Svg></IconButton>
                <Sep />
                <IconButton $w={36} aria-label="Show formatting marks"><Svg w={20} h={26}><path d="M9 1h13M13 1v24M19 1v24" /><path d="M13 1v14H9A7 7 0 0 1 9 1z" fill={ink} stroke="none" /></Svg></IconButton>
              </Row>
              <Row $gap={16}>
                <Pair $gap={4}>
                  <AlignButton aria-label="Align left"><AlignIcon kind="left" /></AlignButton>
                  <AlignButton aria-label="Center" $active><AlignIcon kind="center" /></AlignButton>
                  <AlignButton aria-label="Align right"><AlignIcon kind="right" /></AlignButton>
                  <AlignButton aria-label="Justify"><AlignIcon kind="full" /></AlignButton>
                </Pair>
                <Sep />
                <Split label="Line spacing" w={36}><Svg w={32}>{lines([[15, 3, 18], [15, 11, 18], [15, 19, 18], [15, 27, 18]])}<path d="M6 13V3M2 7l4-5 4 5M6 18v11M2 24l4 5 4-5" stroke={sky} /></Svg></Split>
                <Sep />
                <Pair $gap={12}>
                  <Split label="Shading" w={40}><Svg w={26} h={28}><path d="M19 12V4q-1-4-4-2L13 4 5 14l9 9 10-10-5-6" fill="#fafafa" /><path d="M21 7q8-1 7 14-2-5-7-9z" fill="#2c69b0" stroke="none" /></Svg></Split>
                  <BorderSplit>
                    <BorderMain $active aria-label="Borders"><Svg w={30} h={30}><rect width="30" height="30" fill="#fff" stroke="none" /><path d="M0 1h30M0 15h30M1 0v28M15 0v28M29 0v28" strokeDasharray="2 2" /><path d="M0 29h30" stroke="#000" /></Svg></BorderMain>
                    <BorderDrop aria-label="Border options"><Chevron /></BorderDrop>
                  </BorderSplit>
                </Pair>
              </Row>
            </Rows>
            <GroupLabel>Paragraph</GroupLabel>
          </Group>
          <GroupSep />

          <Group>
            <StylesRow>
              <Gallery>
                {STYLES.map((s) => (
                  <StyleSlot key={s.name} $active={s.active}>
                    <StyleCard>
                      <Sample $serif={s.serif} $size={s.size} $weight={s.weight} $italic={s.italic}>{s.sample}</Sample>
                      <StyleName>{s.name}</StyleName>
                    </StyleCard>
                  </StyleSlot>
                ))}
                <More aria-label="More styles"><Svg w={10} h={14} sw={3}><path d="M2 1l6 6-6 6" /></Svg></More>
              </Gallery>
              <BigButton $w={64}><StylesPaneIcon />Styles Pane</BigButton>
            </StylesRow>
            <GroupLabel>Styles</GroupLabel>
          </Group>
          <GroupSep />

          <Group $w={122}>
            <Centered><BigButton $w={80}><MicIcon />Dictate</BigButton></Centered>
            <GroupLabel>Voice</GroupLabel>
          </Group>
          <GroupSep />

          <Group $w={110} $last>
            <Centered><BigButton $w={64}><EditorIcon />Editor</BigButton></Centered>
            <GroupLabel>Editor</GroupLabel>
          </Group>
        </Ribbon>
      </Chrome>

      <RulerBar>
        <RulerCorner><Svg w={14} h={20} sw={2}><path d="M2 20V5h6" /><path d="M7 0l6 5-6 5z" fill="currentColor" stroke="none" /></Svg></RulerCorner>
        <RulerTrack><Ruler /></RulerTrack>
      </RulerBar>

      <Workspace>
        <SideRuler />
        <SideGutter />
        <Canvas>
          <Page $h={282} $cut />
          <Page $h={1078}>
            <PageNumber>3</PageNumber>
            <Section $h={320}>Cash From Operating Activities:</Section>
            <Section $h={282}>Cash From Investing Activities:</Section>
            <Section>Cash From Financing Activities:</Section>
          </Page>
        </Canvas>
      </Workspace>

      <StatusBar>
        <StatusSide $gap={40}>
          <StatusButton>Page 2 of 3</StatusButton>
          <StatusButton>182 words</StatusButton>
          <StatusButton aria-label="Proofing"><Svg w={30} h={28}><path d="M13 4q-2-3-5-3H1v20h7q3 0 5 3 2-3 5-3h8M13 4v20M13 4q2-3 5-3h8v4M20 7l11 12M31 7L20 19" /></Svg></StatusButton>
          <StatusButton>English (United States)</StatusButton>
          <StatusButton>Text Predictions: On</StatusButton>
        </StatusSide>
        <StatusSide $gap={0}>
          <StatusButton><Svg w={30} h={24}><rect x="1" y="1" width="28" height="21" rx="1" /><path d="M6 10V6h4M20 6h4v4M24 14v4h-4M10 18H6v-4" /></Svg>Focus</StatusButton>
          <Views>
            <ViewButton $active $w={74} aria-label="Print layout"><Svg w={28} h={26}><rect x="1" y="1" width="26" height="24" rx="1" /><path d="M3 5h22M3 9h22M3 13h22M3 17h22M3 21h22" /></Svg></ViewButton>
            <ViewButton aria-label="Web layout"><Svg w={32} h={28}><path d="M14 22H1V1h22v8M4 5h15M4 10h15M4 14h9M4 18h9" /><circle cx="23" cy="19" r="8" fill="#626262" /><path d="M18 14q3 0 4 3t-2 3l2 5q-5-3-5-7zM26 16q4 2 2 6-3-2-2-6z" fill="#dedede" stroke="none" /></Svg></ViewButton>
            <ViewButton aria-label="Outline"><Svg w={30} h={22}><path d="M0 1h3M6 1h14M8 7h3M13 7h17M8 13h3M13 13h17M4 20h3M10 20h16" /></Svg></ViewButton>
            <ViewButton aria-label="Draft"><Svg w={28} h={22}><path d="M0 1h28M0 7h20M0 13h28M0 20h20" /></Svg></ViewButton>
          </Views>
          <Zoom>
            <StatusButton aria-label="Zoom out"><Svg w={16} h={16} sw={4}><path d="M0 8h16" /></Svg></StatusButton>
            <Range type="range" min="0" max="100" defaultValue="32" aria-label="Zoom" />
            <StatusButton aria-label="Zoom in"><Svg w={16} h={16} sw={4}><path d="M0 8h16M8 0v16" /></Svg></StatusButton>
          </Zoom>
          <StatusButton>68%</StatusButton>
        </StatusSide>
      </StatusBar>

      <Preview><PreviewPicture /></Preview>
    </Shell>
  );
}
